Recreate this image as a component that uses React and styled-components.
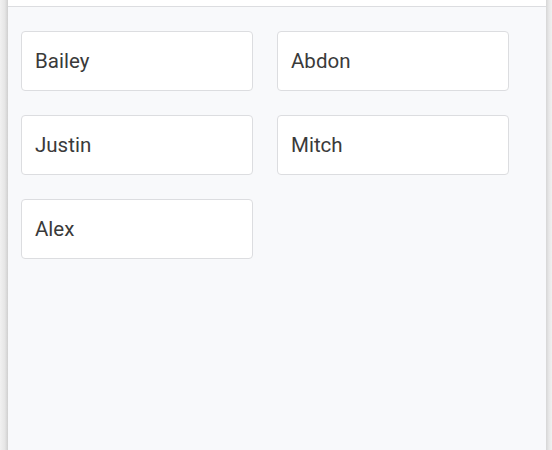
import React from 'react';
import styled, { createGlobalStyle } from 'styled-components';

const GlobalStyle = createGlobalStyle`
  html, body {
    margin: 0;
    padding: 0;
    height: 100%;
    overflow: hidden;
  }
  body {
    font-family: Roboto, "Liberation Sans", Arial, sans-serif;
  }
  #root {
    height: 100%;
  }
`;

const Page = styled.div`
  display: flex;
  height: 450px;
  width: 552px;
`;

const Edge = styled.div`
  width: ${(p) => p.$width}px;
  flex-shrink: 0;
  background: ${(p) =>
    p.$side === 'left'
      ? 'linear-gradient(to right, #f1f1f1, #e6e6e6 60%, #cfcfcf)'
      : 'linear-gradient(to right, #d6d6d6, #e8e8e8 50%, #f0f0f0)'};
`;

const Panel = styled.div`
  flex: 1;
  display: flex;
  flex-direction: column;
  background: #f8f9fb;
`;

const TopBar = styled.div`
  height: 6px;
  background: #ffffff;
  border-bottom: 1px solid #dcdde0;
`;

const Grid = styled.div`
  display: grid;
  grid-template-columns: repeat(2, 232px);
  gap: 24px;
  padding: 24px 13px;
`;

const Card = styled.div`
  box-sizing: border-box;
  height: 60px;
  display: flex;
  align-items: center;
  padding: 0 13px;
  background: #ffffff;
  border: 1px solid #dcdde0;
  border-radius: 4px;
  font-size: 20.5px;
  color: #3a3a3a;
`;

const names = ['Bailey', 'Abdon', 'Justin', 'Mitch', 'Alex'];

export default function App() {
  return (
    <>
      <GlobalStyle />
      <Page>
        <Edge $side="left" $width={8} />
        <Panel>
          <TopBar />
          <Grid>
            {names.map((n) => (
              <Card key={n}>{n}</Card>
            ))}
          </Grid>
        </Panel>
        <Edge $side="right" $width={6} />
      </Page>
    </>
  );
}
